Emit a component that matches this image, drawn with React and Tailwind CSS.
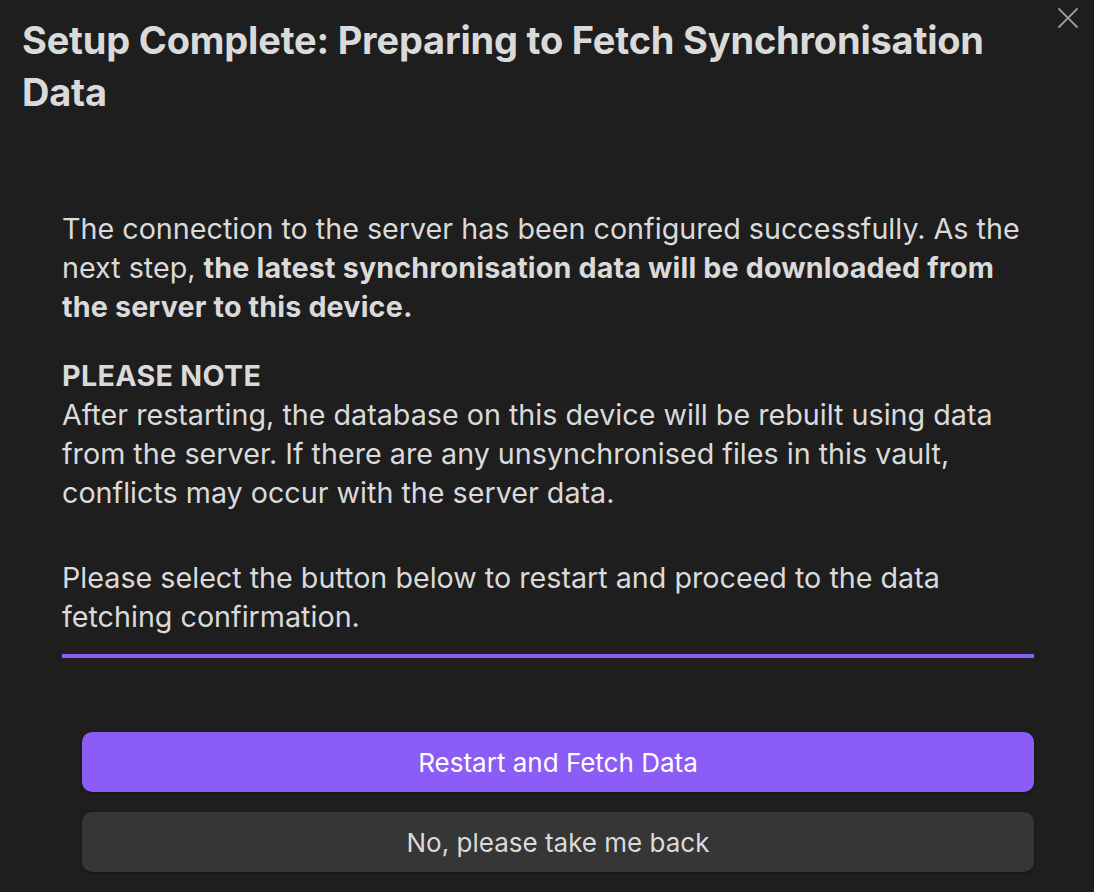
import React from "react";

export default function App() {
  return (
    <div className="relative w-[1094px] h-[892px] bg-[#1e1e1e] overflow-hidden font-['Inter',sans-serif] text-[#dadada]">
      <button className="absolute left-[1057px] top-[8px] w-[22px] h-[20px] text-[#9a9a9a]">
        <svg viewBox="0 0 22 20" width="22" height="20" fill="none" stroke="currentColor" strokeWidth="1.8" strokeLinecap="round">
          <path d="M2 1 L20 19 M20 1 L2 19" />
        </svg>
      </button>
      <div className="pl-[22px] pr-[60px] pt-[14px]">
        <h1 className="text-[38px] leading-[52px] font-bold text-[#dadada] tracking-[-0.2px]">
          Setup Complete: Preparing to Fetch Synchronisation Data
        </h1>
      </div>
      <div className="ml-[62px] w-[972px] mt-[91px] text-[28.7px] leading-[39px]">
        <p>
          The connection to the server has been configured successfully. As the next step,{" "}
          <strong className="font-bold tracking-[0.15px]">the latest synchronisation data will be downloaded from the server to this device.</strong>
        </p>
        <p className="mt-[30px]">
          <strong className="font-bold tracking-[0.3px]">PLEASE NOTE</strong>
          <br />
          After restarting, the database on this device will be rebuilt using data from the server. If there are any unsynchronised files in this vault, conflicts may occur with the server data.
        </p>
        <p className="mt-[46px]">
          Please select the button below to restart and proceed to the data fetching confirmation.
        </p>
        <div className="mt-[18px] h-[4px] bg-[#8b5cf6]" />
      </div>
      <div className="ml-[82px] w-[952px] mt-[74px] flex flex-col gap-[20px]">
        <button className="h-[60px] rounded-[10px] bg-[#8b5cf6] text-white text-[26px] shadow-[0_1px_3px_rgba(0,0,0,0.4)]">
          Restart and Fetch Data
        </button>
        <button className="h-[60px] rounded-[10px] bg-[#363636] text-[#dadada] text-[26px] shadow-[0_1px_3px_rgba(0,0,0,0.4)]">
          No, please take me back
        </button>
      </div>
    </div>
  );
}
